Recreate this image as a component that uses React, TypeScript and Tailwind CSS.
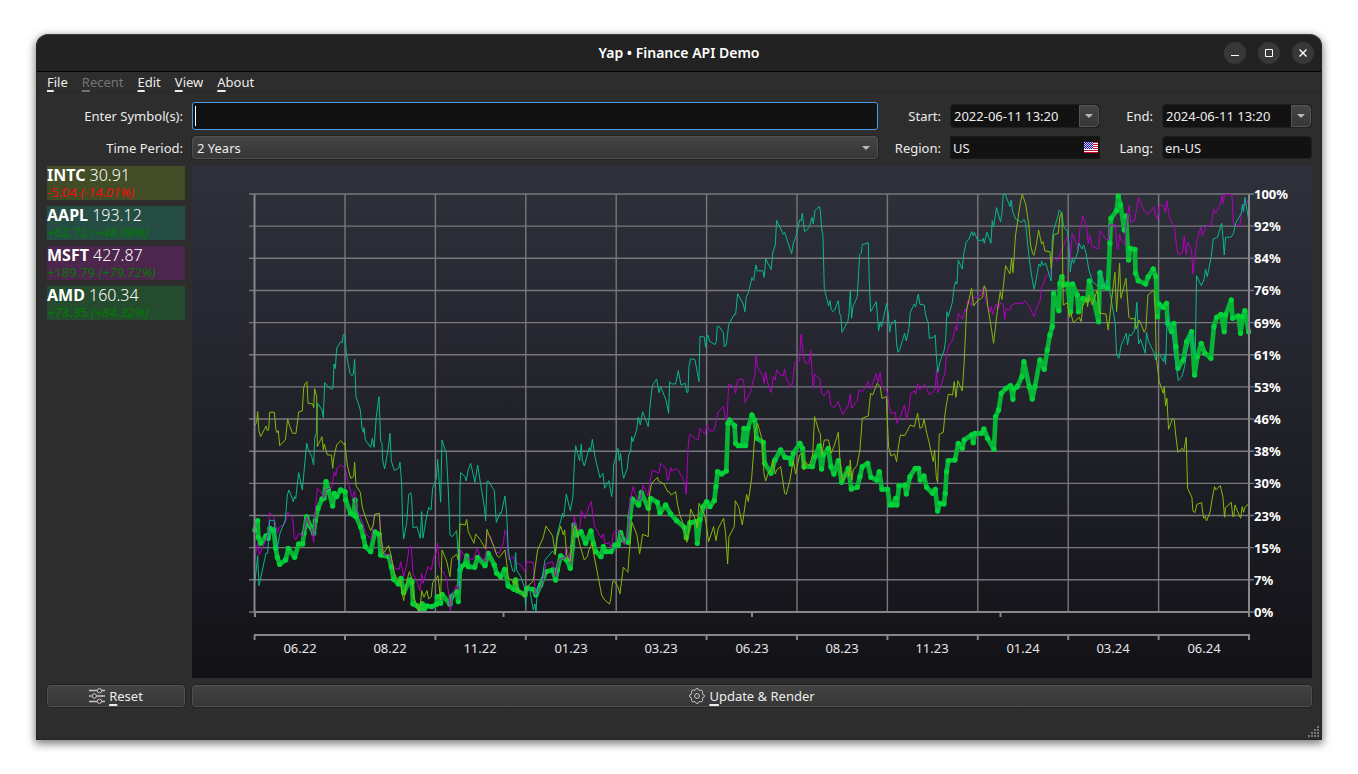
import type { ReactNode } from "react";

const menus = [
  { name: "File" },
  { name: "Recent", disabled: true },
  { name: "Edit" },
  { name: "View" },
  { name: "About" },
];

const tickers = [
  { symbol: "INTC", price: "30.91", change: "-5.04", percent: "(-14.01%)", bg: "bg-[#424c26]", text: "text-[#f20d0d]" },
  { symbol: "AAPL", price: "193.12", change: "+62.72", percent: "(+48.09%)", bg: "bg-[#254d43]", text: "text-[#007c00]" },
  { symbol: "MSFT", price: "427.87", change: "+189.79", percent: "(+79.72%)", bg: "bg-[#4c264d]", text: "text-[#007c00]" },
  { symbol: "AMD", price: "160.34", change: "+73.35", percent: "(+84.32%)", bg: "bg-[#254b2e]", text: "text-[#007c00]" },
];

const percentLabels = [100, 92, 84, 76, 69, 61, 53, 46, 38, 30, 23, 15, 7, 0];
const dateLabels = ["06.22", "08.22", "11.22", "01.23", "03.23", "06.23", "08.23", "11.23", "01.24", "03.24", "06.24"];

// series points are stored at three units per chart pixel
const aapl =
  "45,1205 53,1127 57,1217 78,1120 83,1120 89,1021 102,1021 112,1105 119,1063 136,1020 142,945 147,930 160,965 163,950 167,957 176,878 187,930 200,790 204,805 215,830 221,855 224,775 229,760 233,670 246,690 250,713 254,608 262,618 275,628 279,625 282,552 286,566 290,505 302,485 307,488 310,463 315,468 319,520 325,555 330,580 335,587 340,583 344,538 348,650 354,668 361,690 366,745 370,757 372,743 376,780 392,802 397,775 402,802 409,710 417,650 422,785 426,788 428,840 434,867 444,810 450,760 454,843 463,871 476,865 480,847 485,910 488,1035 491,1077 500,1030 506,945 512,938 515,953 519,1043 531,1040 541,1075 545,995 549,1074 558,1020 566,982 573,990 578,925 589,895 593,838 602,967 606,780 619,820 625,930 630,1065 637,1070 650,1052 655,1130 658,1220 660,922 662,878 675,890 679,903 684,872 692,850 705,907 713,855 720,900 733,980 737,1023 741,905 745,903 763,932 769,1028 780,998 784,1000 795,948 800,1000 805,1110 810,1140 818,1172 824,1175 827,1118 830,1170 842,1190 853,1220 857,1280 859,1220 867,1217 880,1290 885,1272 888,1296 893,1220 905,1205 915,1140 938,1113 946,1125 950,1070 968,1000 971,1012 979,942 991,992 999,950 1003,850 1007,797 1019,843 1024,793 1027,840 1033,858 1048,803 1052,815 1057,778 1065,830 1080,893 1089,880 1094,925 1107,902 1115,950 1118,930 1121,855 1134,805 1138,842 1142,820 1147,875 1151,895 1162,865 1166,825 1172,815 1175,770 1179,785 1190,750 1195,712 1201,735 1208,695 1225,740 1232,660 1237,618 1250,597 1257,638 1262,620 1278,660 1286,700 1289,605 1295,612 1307,612 1315,572 1323,615 1336,610 1340,637 1344,637 1347,560 1352,536 1365,539 1377,605 1380,470 1393,471 1397,502 1401,467 1405,467 1409,484 1425,494 1429,485 1432,440 1436,438 1450,457 1453,500 1459,495 1466,435 1482,404 1487,404 1493,341 1510,372 1515,395 1519,350 1525,340 1536,293 1541,302 1548,255 1552,273 1568,272 1573,292 1577,237 1594,269 1598,220 1606,195 1610,121 1630,163 1634,157 1655,221 1660,190 1668,170 1679,120 1684,122 1687,100 1694,155 1708,142 1716,112 1720,132 1725,92 1738,79 1741,90 1745,145 1749,165 1753,325 1766,378 1770,362 1774,388 1779,395 1784,390 1795,362 1799,400 1803,410 1806,457 1824,423 1827,400 1831,333 1835,415 1839,380 1852,350 1859,225 1864,220 1867,194 1885,188 1888,300 1892,395 1909,365 1916,452 1921,425 1925,440 1940,370 1945,400 1949,457 1953,435 1966,420 1970,490 1974,517 1979,510 1994,460 1999,483 2007,445 2011,397 2023,372 2027,381 2035,342 2040,373 2053,375 2057,405 2065,430 2068,475 2082,472 2086,465 2090,540 2094,577 2100,545 2113,510 2117,480 2121,395 2125,410 2137,368 2143,320 2147,305 2151,312 2155,240 2167,267 2171,225 2179,185 2187,178 2195,155 2200,168 2203,157 2213,180 2227,182 2230,175 2233,190 2241,157 2253,190 2257,122 2261,140 2270,83 2282,126 2286,100 2290,43 2296,43 2310,80 2314,60 2318,95 2328,118 2345,127 2352,118 2357,130 2362,180 2369,245 2378,305 2383,328 2391,285 2397,252 2402,260 2405,243 2409,255 2417,250 2434,303 2437,180 2441,150 2454,110 2458,90 2466,102 2471,140 2483,155 2487,190 2491,275 2497,235 2501,250 2513,218 2517,190 2526,207 2531,195 2539,222 2547,270 2558,305 2575,320 2580,270 2590,325 2602,300 2608,325 2615,365 2626,430 2630,525 2637,535 2644,495 2659,460 2663,495 2668,463 2673,468 2683,453 2691,367 2696,492 2702,478 2716,520 2720,457 2726,485 2743,520 2747,540 2756,520 2760,525 2771,545 2774,522 2777,553 2781,440 2785,405 2797,460 2802,510 2815,602 2827,588 2835,555 2841,510 2845,500 2854,455 2860,510 2866,525 2870,287 2884,317 2892,300 2897,268 2902,290 2914,230 2920,177 2933,172 2945,130 2949,170 2953,225 2957,172 2974,171 2981,160 2987,130 3004,100 3008,72 3011,95 3015,52 3019,75 3026,118";

const intc =
  "45,735 50,728 53,695 57,755 62,770 78,738 82,752 86,750 89,697 103,697 108,750 111,758 115,752 119,797 136,780 143,718 149,738 158,760 168,760 176,696 187,693 191,622 196,610 201,605 204,670 218,672 221,683 224,626 230,650 232,800 246,770 250,810 253,792 262,825 274,825 278,865 282,830 290,795 302,782 313,795 315,788 319,830 323,860 332,895 341,890 344,847 348,917 361,937 367,982 376,1010 392,1052 400,1035 404,1003 418,1000 422,1065 430,1120 446,1097 452,1122 463,1180 476,1205 482,1198 487,1240 491,1262 495,1235 500,1205 508,1175 515,1193 521,1250 537,1295 541,1280 545,1232 552,1252 561,1232 566,1257 574,1250 578,1207 590,1195 594,1187 602,1260 606,1110 620,1143 630,1190 635,1135 650,1123 655,1140 660,1032 676,1035 680,1018 685,1055 702,1090 707,1062 720,1078 737,1107 741,1048 746,1063 762,1100 770,1125 777,1133 795,1110 801,1155 805,1195 816,1200 822,1215 827,1195 832,1232 846,1237 855,1252 862,1220 880,1203 886,1160 893,1110 909,1075 918,1038 938,1068 946,1125 952,1075 962,1038 970,1065 974,1050 980,1125 990,1145 996,1100 1002,1045 1007,1038 1021,1100 1033,1140 1042,1130 1047,1110 1056,1090 1062,1125 1085,1245 1094,1260 1108,1272 1112,1260 1118,1205 1122,1203 1134,1220 1140,1242 1150,1162 1164,1177 1167,1130 1176,1027 1191,1065 1199,1122 1208,1063 1225,1070 1229,940 1235,910 1253,892 1255,903 1272,912 1283,935 1287,935 1294,945 1307,935 1313,975 1320,1005 1334,1045 1341,1087 1347,1045 1352,987 1367,1020 1372,1045 1377,970 1394,1005 1400,1040 1406,1085 1421,1040 1428,1082 1435,1045 1451,1015 1457,1060 1463,1152 1467,1070 1483,1040 1486,962 1496,980 1507,1035 1520,943 1525,965 1535,895 1540,830 1545,755 1553,730 1568,785 1572,880 1577,903 1586,875 1594,870 1598,840 1606,882 1610,870 1622,860 1630,910 1634,940 1639,943 1650,900 1660,840 1667,882 1679,825 1687,820 1692,870 1696,845 1708,858 1718,825 1724,710 1738,757 1741,760 1745,825 1753,780 1766,780 1773,820 1782,800 1795,757 1800,840 1807,905 1823,873 1827,890 1831,840 1836,900 1840,870 1851,857 1860,810 1867,715 1885,708 1892,640 1898,645 1912,610 1921,620 1926,655 1939,650 1942,720 1946,800 1953,828 1964,822 1970,845 1974,810 1981,765 1994,767 2011,735 2023,740 2033,700 2040,745 2047,742 2052,717 2060,757 2067,785 2080,845 2084,810 2089,890 2093,908 2098,763 2110,757 2115,705 2120,670 2125,643 2138,645 2143,605 2148,652 2154,602 2167,633 2172,560 2180,390 2187,360 2195,325 2201,378 2213,362 2228,352 2233,317 2238,327 2243,375 2255,450 2261,490 2272,395 2281,335 2286,358 2297,257 2310,282 2315,235 2319,278 2327,165 2340,75 2347,43 2357,71 2366,130 2372,195 2378,220 2382,226 2390,190 2396,150 2405,192 2409,185 2415,213 2430,215 2434,265 2441,165 2455,160 2460,110 2466,98 2470,375 2483,368 2488,412 2493,400 2500,428 2518,412 2524,425 2528,380 2540,352 2543,380 2548,345 2557,375 2572,330 2580,400 2598,402 2605,450 2615,360 2625,277 2630,395 2639,250 2643,355 2658,295 2667,412 2673,417 2685,415 2688,447 2698,420 2713,457 2718,445 2724,345 2742,330 2746,400 2749,530 2758,605 2770,640 2773,620 2777,678 2781,655 2786,748 2798,715 2803,720 2808,770 2814,817 2827,805 2832,812 2839,772 2843,925 2856,952 2859,993 2865,998 2871,973 2885,968 2891,1015 2896,1010 2900,1023 2911,995 2916,960 2924,920 2928,930 2941,917 2949,950 2954,1012 2957,983 2974,967 2979,1010 2982,1010 2985,975 3002,1015 3007,980 3011,997 3015,982 3026,972";

const msft =
  "44,1140 53,1090 58,1125 78,1080 85,1060 89,998 103,1015 112,1060 118,1042 135,1030 144,997 158,1015 163,1075 167,1080 176,1060 188,1070 200,1010 210,1040 215,1045 221,1087 226,990 232,925 245,940 251,955 256,930 275,922 283,875 287,888 292,863 302,855 316,865 325,910 337,952 344,932 348,980 360,1010 370,1035 376,1060 394,1078 403,1005 418,1000 424,1095 432,1125 447,1122 455,1148 464,1165 478,1168 482,1145 491,1190 500,1155 508,1100 514,1100 519,1180 532,1208 540,1232 545,1180 549,1210 564,1160 574,1170 580,1135 588,1120 593,1090 598,1160 608,1175 620,1195 627,1250 631,1295 636,1250 650,1215 655,1230 662,1110 680,1135 700,1138 708,1115 712,1105 720,1130 737,1145 741,1060 752,1070 765,1115 778,1120 790,1090 795,1050 800,1055 804,1125 807,1140 820,1130 825,1147 831,1150 842,1155 855,1175 859,1145 880,1148 886,1245 900,1225 910,1200 918,1152 938,1145 947,1190 955,1145 962,1135 975,1135 979,1100 992,1150 996,1110 1003,1008 1009,1045 1019,1050 1024,992 1035,1015 1047,980 1054,965 1058,1000 1064,1040 1085,1075 1090,1062 1095,1092 1108,1088 1114,1105 1120,1060 1133,1048 1140,1060 1153,1095 1164,1060 1170,970 1179,920 1193,960 1202,958 1209,915 1224,947 1230,905 1237,870 1257,880 1262,850 1278,865 1283,902 1287,895 1292,863 1296,873 1307,867 1315,870 1325,890 1333,905 1339,943 1344,810 1347,775 1351,762 1368,778 1375,780 1380,745 1395,763 1401,735 1408,753 1422,752 1428,728 1433,698 1450,680 1457,720 1461,720 1466,613 1482,620 1487,640 1493,600 1507,596 1512,610 1515,668 1532,635 1540,600 1545,585 1548,527 1553,563 1568,585 1573,610 1577,575 1582,605 1594,638 1600,590 1606,600 1610,570 1622,585 1630,588 1634,567 1639,597 1654,622 1659,600 1664,550 1679,542 1683,463 1688,500 1692,540 1696,550 1708,547 1712,512 1720,625 1724,583 1740,597 1745,640 1752,648 1766,630 1773,675 1782,683 1795,665 1800,682 1809,704 1825,675 1831,642 1835,685 1852,662 1857,630 1868,635 1885,605 1892,627 1909,580 1914,608 1921,577 1926,622 1942,635 1946,670 1953,700 1966,697 1971,730 1980,712 1994,675 2000,720 2008,680 2012,640 2023,633 2027,643 2033,612 2040,630 2053,613 2062,630 2068,645 2086,628 2090,567 2094,638 2105,610 2115,580 2120,520 2127,495 2138,480 2147,437 2151,452 2155,400 2168,418 2175,387 2180,398 2184,360 2195,377 2198,345 2200,355 2225,345 2229,322 2233,340 2240,370 2250,395 2254,380 2258,403 2268,372 2273,390 2282,368 2290,373 2294,418 2299,385 2310,390 2315,375 2328,370 2349,370 2355,362 2368,380 2382,410 2391,382 2401,362 2404,322 2412,310 2416,288 2432,282 2437,240 2441,233 2453,243 2465,210 2483,170 2487,190 2491,238 2497,160 2512,195 2515,213 2520,145 2524,142 2528,107 2540,140 2545,190 2550,165 2557,200 2576,207 2581,152 2598,178 2606,180 2610,135 2626,133 2631,205 2635,208 2639,163 2643,180 2655,195 2659,130 2668,75 2672,127 2684,122 2690,85 2696,52 2712,92 2725,103 2742,80 2746,105 2753,118 2758,75 2772,78 2776,97 2781,62 2788,110 2804,145 2810,200 2815,225 2828,217 2833,168 2839,225 2844,187 2855,210 2859,282 2866,230 2870,185 2883,142 2887,168 2898,140 2914,135 2921,87 2927,100 2942,72 2947,43 2950,70 2954,43 2976,43 2981,133 3000,137 3008,78 3020,72 3026,55";

const amd =
  "45,1050 53,1022 55,1072 62,1090 78,1068 85,1075 90,1045 101,1050 107,1105 112,1132 119,1153 137,1140 145,1105 164,1132 176,1092 188,1092 192,1060 200,1010 210,1038 221,1060 226,1022 234,985 246,957 252,955 258,905 265,928 278,978 283,940 290,950 302,930 315,935 317,960 332,1000 341,1005 345,960 348,1010 362,1040 370,1070 376,1100 392,1115 405,1056 418,1063 422,1125 447,1130 454,1160 461,1198 475,1212 483,1195 491,1238 510,1200 516,1205 519,1272 532,1278 541,1290 547,1272 552,1288 561,1278 575,1280 590,1273 592,1250 602,1270 606,1243 630,1273 635,1250 650,1235 655,1265 660,1170 664,1160 676,1152 680,1128 685,1160 704,1162 713,1132 735,1157 745,1120 763,1155 770,1180 782,1190 794,1168 805,1218 822,1228 827,1200 832,1232 855,1245 860,1225 880,1228 888,1245 902,1215 918,1175 938,1170 947,1200 952,1170 962,1128 980,1140 991,1165 998,1100 1002,1035 1010,1065 1023,1055 1037,1090 1053,1053 1060,1090 1068,1115 1083,1130 1090,1100 1098,1115 1113,1115 1125,1095 1135,1095 1142,1058 1150,1080 1164,1087 1170,1010 1177,957 1196,975 1204,937 1225,985 1232,955 1252,967 1260,1000 1277,975 1292,1002 1310,1022 1333,1042 1339,1073 1350,1028 1368,1025 1372,1090 1380,1020 1390,980 1400,965 1410,980 1423,962 1428,920 1433,875 1445,882 1459,873 1464,730 1468,720 1484,737 1487,790 1495,797 1507,797 1512,745 1517,797 1524,745 1536,705 1544,720 1550,775 1570,787 1574,850 1593,880 1605,840 1622,810 1635,832 1650,835 1654,852 1660,820 1680,790 1688,805 1692,860 1717,860 1725,830 1738,798 1745,867 1750,825 1765,805 1773,860 1782,882 1795,842 1805,907 1825,865 1834,927 1852,922 1860,890 1867,860 1883,850 1893,892 1910,900 1918,875 1926,928 1943,928 1950,975 1960,975 1967,955 1971,975 1977,917 1995,915 1999,942 2010,890 2026,865 2036,865 2041,900 2052,888 2060,922 2078,940 2086,928 2093,993 2100,970 2112,972 2116,940 2120,875 2125,842 2145,840 2155,790 2167,805 2173,780 2195,765 2200,788 2205,760 2225,760 2232,747 2243,775 2262,808 2267,710 2276,690 2284,640 2298,625 2312,617 2319,658 2321,628 2332,620 2346,590 2352,545 2368,620 2377,657 2385,620 2400,540 2413,568 2422,510 2430,465 2437,440 2441,340 2457,392 2460,310 2466,290 2470,315 2483,312 2492,395 2498,312 2512,345 2516,395 2528,355 2542,360 2548,303 2576,425 2580,278 2590,320 2604,325 2610,190 2613,115 2630,92 2635,48 2642,75 2653,150 2658,108 2666,240 2671,205 2685,208 2687,280 2695,302 2717,312 2725,290 2740,267 2748,290 2753,410 2757,372 2770,382 2780,370 2783,430 2795,455 2802,430 2808,500 2814,565 2830,540 2840,485 2855,455 2864,585 2872,530 2884,490 2895,520 2913,535 2922,440 2930,412 2943,403 2953,455 2957,405 2974,360 2978,415 2995,408 3002,460 3008,410 3015,392 3026,455";

function Mnemonic({ text }: { text: string }) {
  return (
    <span>
      <span className="underline decoration-2 underline-offset-3">{text[0]}</span>
      {text.slice(1)}
    </span>
  );
}

function Caret() {
  return (
    <svg viewBox="0 0 8 4" className="h-1 w-2 fill-[#b9b9b9]">
      <path d="M0 0h8L4 4z" />
    </svg>
  );
}

function WindowButton({ label, children }: { label: string; children: ReactNode }) {
  return (
    <button type="button" aria-label={label} className="flex size-[22px] items-center justify-center rounded-full bg-[#383838]">
      <svg viewBox="0 0 10 10" className="size-2.5 fill-none stroke-white">
        {children}
      </svg>
    </button>
  );
}

function DateField({ id, value }: { id: string; value: string }) {
  return (
    <div className="flex h-6 rounded-sm border border-[#202020] bg-[#121212]">
      <input id={id} defaultValue={value} className="w-0 flex-1 bg-transparent px-[3px] outline-none" />
      <button
        type="button"
        aria-label="Open calendar"
        className="flex w-5 items-center justify-center rounded-r-sm border border-[#565656] bg-linear-to-b from-[#454545] to-[#363636]"
      >
        <Caret />
      </button>
    </div>
  );
}

function Flag() {
  return (
    <svg viewBox="0 0 14 11" className="mr-px h-[11px] w-3.5 shrink-0">
      <rect width="14" height="11" fill="#fff" />
      {[0, 2, 4, 6, 8, 10].map((y) => (
        <rect key={y} y={y} width="14" height="1" fill="#c8102e" />
      ))}
      <rect width="9" height="7" fill="#2222a8" />
      {[0, 1, 2, 3, 4, 5, 6].map((y) => (
        <path key={y} d={`M${y % 2} ${y + 0.5}H9`} stroke="#c4c4ee" strokeDasharray="1 1" />
      ))}
    </svg>
  );
}

function SlidersIcon() {
  return (
    <svg viewBox="0 0 16 16" className="size-4 fill-none stroke-[#c8c8c8]">
      <path d="M0 2.500h8M13 2.500h3M0 8h2.500M8 8h8M0 13.500h8M13 13.500h3" strokeWidth="1.500" />
      <circle cx="10.500" cy="2.800" r="2.200" />
      <circle cx="5.300" cy="8" r="2.200" />
      <circle cx="10.500" cy="13.200" r="2.200" />
    </svg>
  );
}

function GearIcon() {
  return (
    <svg viewBox="0 0 16 16" className="size-4 fill-none stroke-[#c8c8c8]" strokeLinejoin="round">
      <path d="M6.300 1.800Q6.500.6 8 .6t1.700 1.200Q10 2.800 11 2.400q1.300-.8 2.200.300t.2 2.200q-.6 1 .6 1.300Q15.400 6.600 15.400 8t-1.400 1.800q-1.200.3-.6 1.300.7 1.100-.2 2.200t-2.200.3q-1-.4-1.300.6-.2 1.200-1.700 1.200t-1.700-1.200q-.3-1-1.300-.6-1.300.8-2.200-.3t-.2-2.200q.6-1-.6-1.300Q.6 9.400.6 8T2 6.200q1.200-.3.6-1.300-.7-1.100.2-2.200T5 2.400q1 .4 1.300-.6z" />
      <circle cx="8" cy="8" r="2.400" />
    </svg>
  );
}

function Chart() {
  const columns = dateLabels.map((_, i) => 62.6 + i * 90.4);
  const rows = percentLabels.map((_, i) => 28 + i * 32.15);
  return (
    <svg
      viewBox="0 0 1120 512"
      role="img"
      aria-label="Price history"
      className="block w-full bg-linear-to-b from-[#2f323b] via-[#21212a] to-[#121217] font-['Noto_Sans',sans-serif] text-[13px]"
    >
      <g stroke="#77777d" strokeWidth="1.4">
        {columns.slice(1).map((x) => (
          <path key={x} d={`M${x} 28V446`} />
        ))}
        {rows.map((y) => (
          <path key={y} d={`M57 ${y}H1062`} />
        ))}
      </g>
      <g fill="none">
        <g transform="translate(48 14) scale(.3333)" strokeLinejoin="round">
          <polyline points={amd} stroke="#08b435" strokeWidth="14" />
          {amd.split(" ").map((point) => {
            const [x, y] = point.split(",");
            return <circle key={point} cx={x} cy={y} r="8" fill="#03d239" />;
          })}
          <polyline points={msft} stroke="#b400c0" strokeWidth="3" />
          <polyline points={aapl} stroke="#08b88c" strokeWidth="3" />
          <polyline points={intc} stroke="#86ba08" strokeWidth="3" />
        </g>
        <g stroke="#86868b" strokeWidth="2">
          <path d="M62.500 28V446M1057 28V451M62 446H1058M62 469H1058" />
          {[63, 311.5, 560, 808.5].map((x) => (
            <path key={x} d={`M${x} 446v5`} />
          ))}
          {[...columns, 1057].map((x) => (
            <path key={x} d={`M${x} 469v5`} />
          ))}
        </g>
      </g>
      <g fill="#fff" className="font-bold">
        {percentLabels.map((label, i) => (
          <text key={label} x="1062" y={Math.round(rows[i] + 5)}>
            {label}%
          </text>
        ))}
      </g>
      <g fill="#e6e6e6" textAnchor="middle">
        {dateLabels.map((label, i) => (
          <text key={label} x={Math.round(columns[i] + 45)} y="487">
            {label}
          </text>
        ))}
      </g>
    </svg>
  );
}

export default function App() {
  return (
    <div className="min-h-dvh bg-white px-9 py-[34px] font-['Noto_Sans','Open_Sans',sans-serif] text-[13px] leading-4 text-[#ececec]">
      <div className="relative rounded-t-xl border border-[#242424] border-t-[#3a3a3a] bg-[#2d2d2d] shadow-[0_3px_9px_1px_rgba(0,0,0,0.5)]">
        <header className="grid h-[37px] grid-cols-[1fr_auto_1fr] items-center rounded-t-xl border-b border-black bg-[#222]">
          <h1 className="col-start-2 text-sm font-semibold text-white">Yap • Finance API Demo</h1>
          <div className="flex justify-end gap-3 pr-[7px]">
            <WindowButton label="Minimize">
              <path d="M1 7.500h8" />
            </WindowButton>
            <WindowButton label="Maximize">
              <path d="M1.500 1.500h7v7h-7z" />
            </WindowButton>
            <WindowButton label="Close">
              <path d="M1.500 1.500l7 7m0-7l-7 7" strokeWidth="1.400" />
            </WindowButton>
          </div>
        </header>

        <nav aria-label="Menu" className="flex h-[21px] items-center gap-3.5 border-b border-[#282828] px-2.5">
          {menus.map((menu) => (
            <button key={menu.name} type="button" disabled={menu.disabled} className="disabled:text-[#747474]">
              <Mnemonic text={menu.name} />
            </button>
          ))}
        </nav>

        <main className="pt-[9px] pr-[9px] pb-8 pl-2.5">
          <form className="grid grid-cols-[136px_1fr_54px_150px_44px_150px] items-center gap-x-[9px] gap-y-1.5">
            <label htmlFor="symbols" className="text-right">
              Enter Symbol(s):
            </label>
            <div className="flex h-7 items-center rounded-[3px] border border-[#4a9be8] bg-[#121212] pl-0.5">
              <span className="h-5 w-px bg-white" />
              <input id="symbols" className="w-0 flex-1 bg-transparent outline-none" />
            </div>
            <label htmlFor="start" className="text-right">
              Start:
            </label>
            <DateField id="start" value="2022-06-11 13:20" />
            <label htmlFor="end" className="text-right">
              End:
            </label>
            <DateField id="end" value="2024-06-11 13:20" />

            <label htmlFor="period" className="text-right">
              Time Period:
            </label>
            <div className="relative">
              <select
                id="period"
                className="block h-[23px] w-full appearance-none rounded-[3px] border border-[#505050] bg-linear-to-b from-[#444] to-[#363636] px-1 outline outline-[#232323]"
              >
                <option>2 Years</option>
              </select>
              <span className="pointer-events-none absolute top-2.5 right-2">
                <Caret />
              </span>
            </div>
            <label htmlFor="region" className="text-right">
              Region:
            </label>
            <div className="flex h-[23px] items-center border border-[#191919] bg-[#121212]">
              <input id="region" defaultValue="US" className="w-0 flex-1 bg-transparent px-0.5 outline-none" />
              <Flag />
            </div>
            <label htmlFor="lang" className="text-right">
              Lang:
            </label>
            <input
              id="lang"
              defaultValue="en-US"
              className="h-[23px] w-full rounded-sm border border-[#202020] bg-[#121212] px-0.5 outline-none"
            />
          </form>

          <div className="mt-[7px] grid grid-cols-[138px_1fr] gap-[7px]">
            <ul className="space-y-1.5">
              {tickers.map((ticker) => (
                <li key={ticker.symbol} className={`h-[34px] ${ticker.bg}`}>
                  <p className="text-base leading-[18px] text-white">
                    <b>{ticker.symbol}</b> <span className="font-light">{ticker.price}</span>
                  </p>
                  <p className={ticker.text}>
                    {ticker.change} <i>{ticker.percent}</i>
                  </p>
                </li>
              ))}
            </ul>
            <Chart />
            <button
              type="button"
              className="flex h-[22px] items-center justify-center gap-1 rounded-[3px] border border-[#505050] bg-linear-to-b from-[#434343] to-[#363636] outline outline-[#232323]"
            >
              <SlidersIcon />
              <Mnemonic text="Reset" />
            </button>
            <button
              type="button"
              className="flex h-[22px] items-center justify-center gap-1 rounded-[3px] border border-[#505050] bg-linear-to-b from-[#434343] to-[#363636] outline outline-[#232323]"
            >
              <GearIcon />
              <Mnemonic text="Update & Render" />
            </button>
          </div>
        </main>

        <svg viewBox="0 0 12 12" className="absolute right-px bottom-px size-3 fill-[#777]">
          <path d="M9 0h2v2h-2zM6 3h2v2h-2zM9 3h2v2h-2zM3 6h2v2h-2zM6 6h2v2h-2zM9 6h2v2h-2zM0 9h2v2h-2zM3 9h2v2h-2zM6 9h2v2h-2zM9 9h2v2h-2z" />
        </svg>
      </div>
    </div>
  );
}
